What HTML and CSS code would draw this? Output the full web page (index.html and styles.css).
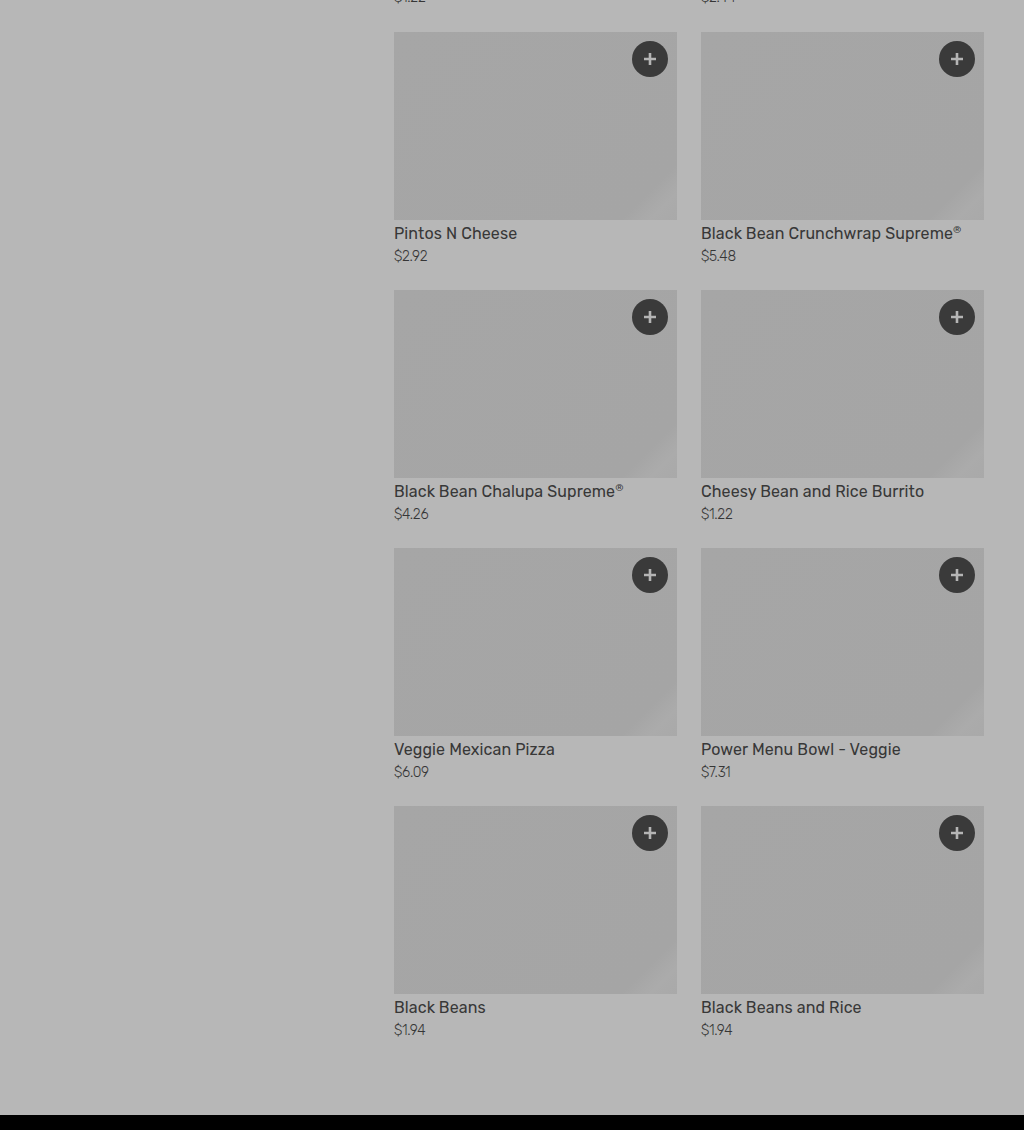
FILE: index.html
```html
<!DOCTYPE html>
<html lang="en">
<head>
<meta charset="UTF-8">
<meta name="viewport" content="width=device-width, initial-scale=1.0">
<title>Menu</title>
<link rel="stylesheet" href="styles.css">
</head>
<body>

<main class="menu">
    <div class="grid" id="grid"></div>
</main>

<footer class="footer"></footer>

<script>
    const items = [
        ['', '$1.22'], ['', '$2.44'],
        ['Pintos N Cheese', '$2.92'], ['Black Bean Crunchwrap Supreme<sup>®</sup>', '$5.48'],
        ['Black Bean Chalupa Supreme<sup>®</sup>', '$4.26'], ['Cheesy Bean and Rice Burrito', '$1.22'],
        ['Veggie Mexican Pizza', '$6.09'], ['Power Menu Bowl - Veggie', '$7.31'],
        ['Black Beans', '$1.94'], ['Black Beans and Rice', '$1.94']
    ];

    const grid = document.getElementById('grid');
    items.forEach(([name, price], i) => {
        const card = document.createElement('div');
        card.className = i < 2 ? 'card card-cut' : 'card';
        card.innerHTML = i < 2
            ? `<p class="price">${price}</p>`
            : `<div class="photo">
                   <button class="add" aria-label="Add item">
                       <svg width="12" height="12" viewBox="0 0 12 12"><path d="M6 0v12M0 6h12" stroke="#b5b5b5" stroke-width="2.6" fill="none"/></svg>
                   </button>
               </div>
               <h3 class="name">${name}</h3>
               <p class="price">${price}</p>`;
        grid.appendChild(card);
    });
</script>

</body>
</html>
```
FILE: styles.css
```css
body {
    margin: 0;
    background: #b7b7b7;
    font-family: Rubik, "Noto Sans", "Liberation Sans", sans-serif;
    color: #3a3a3a;
}
.menu {
    height: 1115px;
    padding-left: 394px;
    padding-right: 40px;
    box-sizing: border-box;
    overflow: hidden;
}
.grid {
    display: grid;
    grid-template-columns: repeat(2, 283px);
    column-gap: 24px;
    row-gap: 24px;
}
.card {
    height: 234px;
}
.card-cut {
    height: 8px;
    display: flex;
    align-items: flex-end;
}
.photo {
    height: 188px;
    background: linear-gradient(135deg, #a6a6a6 0%, #a5a5a5 88%, #ababab 94%, #a9a9a9 100%);
    display: flex;
    justify-content: flex-end;
    align-items: flex-start;
    padding: 9px;
    box-sizing: border-box;
}
.add {
    width: 36px;
    height: 36px;
    border: 0;
    padding: 0;
    border-radius: 50%;
    background: #3a3a3a;
    display: flex;
    justify-content: center;
    align-items: center;
    cursor: pointer;
}
.name {
    margin: 4px 0 0;
    font-size: 16px;
    line-height: 20px;
    font-weight: 400;
    letter-spacing: 0.1px;
    color: #383838;
}
.name sup {
    font-size: 10px;
    line-height: 0;
}
.price {
    margin: 3px 0 0;
    font-size: 14px;
    line-height: 20px;
    font-weight: 300;
    letter-spacing: -0.3px;
    color: #363636;
}
.card-cut .price {
    margin: 0;
}
.footer {
    height: 15px;
    background: #000;
}
```
